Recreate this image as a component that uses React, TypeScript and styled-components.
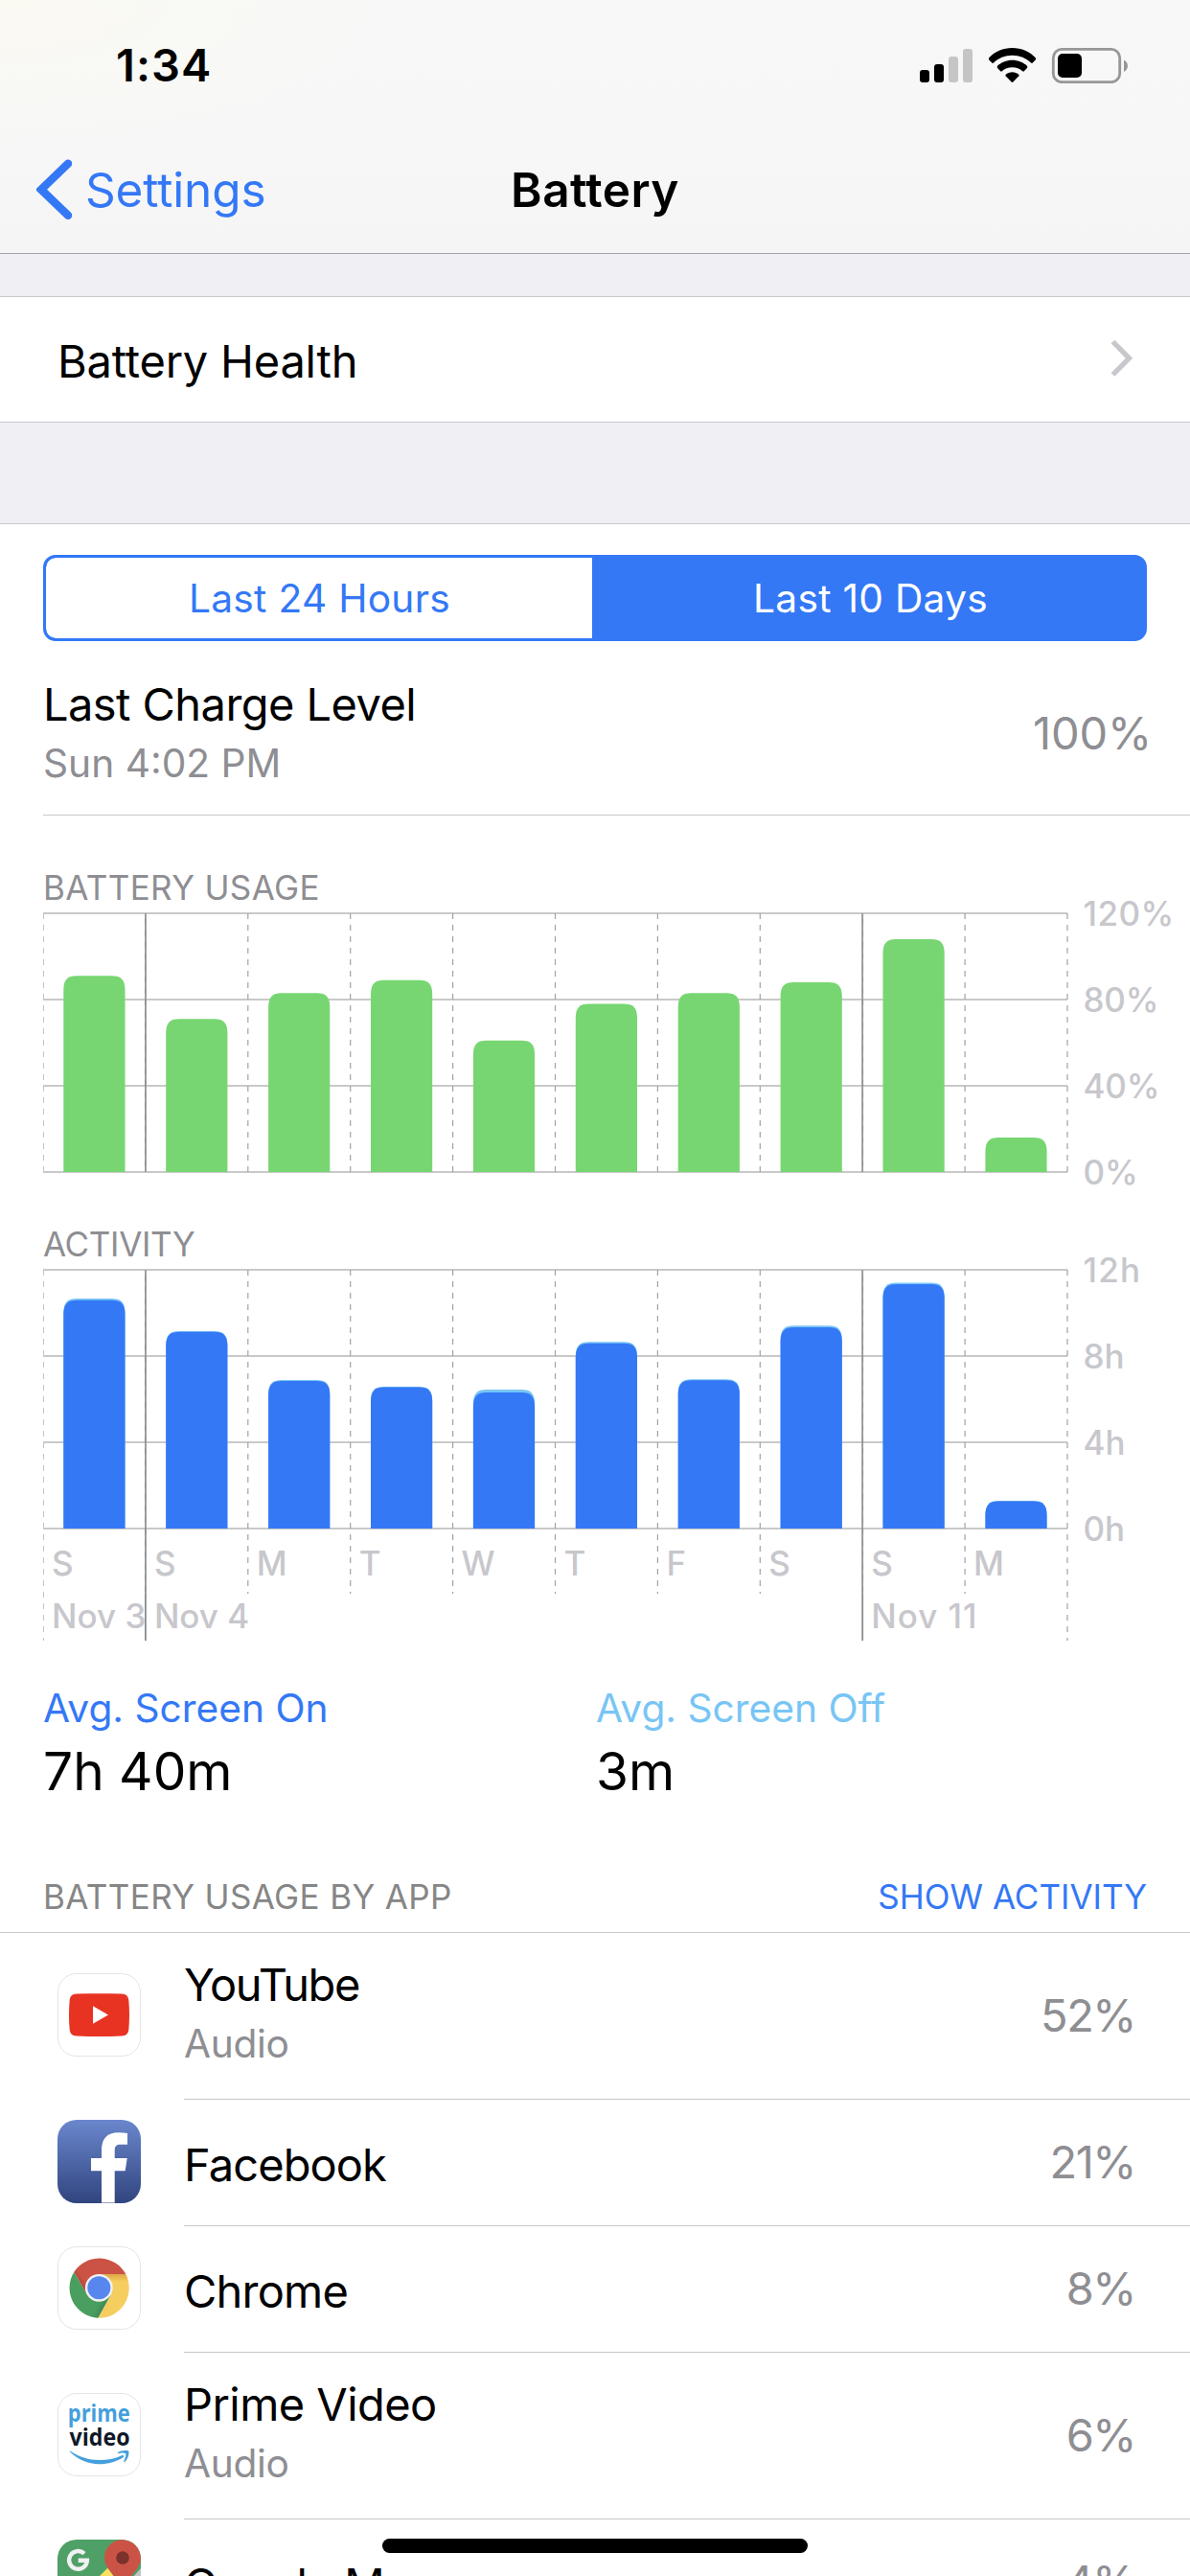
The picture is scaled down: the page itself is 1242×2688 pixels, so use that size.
import React from "react";
import styled, { createGlobalStyle } from "styled-components";

const GlobalStyle = createGlobalStyle`
  html, body { margin: 0; padding: 0; background: #fff; }
  *, *::before, *::after { box-sizing: border-box; }
`;

const color = {
  blue: "#3478f6",
  sky: "#78c5f5",
  green: "#77d672",
  gray: "#8e8e93",
  faint: "#c7c7cc",
  line: "#c8c7cc",
  group: "#efeff4",
};

/* ---------- layout ---------- */

const Screen = styled.div`
  position: relative;
  display: flex;
  flex-direction: column;
  width: 1242px;
  height: 2688px;
  overflow: hidden;
  background: #fff;
  color: #000;
  font-family: Inter, "Liberation Sans", sans-serif;
  font-weight: 400;
  white-space: nowrap;
`;

const Header = styled.header`
  flex: none;
  height: 265px;
  border-bottom: 1px solid #a7a7aa;
  background: radial-gradient(ellipse 420px 160px at 0 0, rgba(251, 250, 240, 0.75), rgba(251, 250, 240, 0)),
    linear-gradient(#f8f8f8, #f7f7f7 60%, #f5f5f5);
`;

const StatusBar = styled.div`
  display: flex;
  align-items: center;
  justify-content: space-between;
  height: 132px;
  padding: 4px 64px 0 121px;
`;

const Time = styled.span`
  font-size: 47px;
  font-weight: 600;
  line-height: 60px;
  letter-spacing: 1.1px;
`;

const NavBar = styled.nav`
  display: grid;
  grid-template-columns: 1fr auto 1fr;
  align-items: center;
  height: 132px;
  padding: 0 38px;
`;

const BackButton = styled.a`
  display: flex;
  align-items: center;
  gap: 13px;
  color: ${color.blue};
  font-size: 49.5px;
  line-height: 64px;
  letter-spacing: -0.14px;
`;

const NavTitle = styled.h1`
  margin: 0;
  font-size: 49.5px;
  font-weight: 600;
  line-height: 64px;
  letter-spacing: 0.44px;
`;

const GroupGap = styled.div<{ $height: number }>`
  flex: none;
  height: ${(p) => p.$height}px;
  border-bottom: 1px solid ${color.line};
  background: ${color.group};
`;

const LinkRow = styled.div`
  display: flex;
  flex: none;
  align-items: center;
  justify-content: space-between;
  height: 131px;
  padding: 0 58px 0 60px;
  border-bottom: 1px solid ${color.line};
`;

const LinkLabel = styled.span`
  padding-top: 4px;
  font-size: 47px;
  line-height: 60px;
  letter-spacing: -0.21px;
`;

const Segments = styled.div`
  display: flex;
  flex: none;
  height: 90px;
  margin: 32px 45px 0;
  border: 3px solid ${color.blue};
  border-radius: 13px;
  background: ${color.blue};
  overflow: hidden;
`;

const Segment = styled.button<{ $active?: boolean }>`
  flex: none;
  width: ${(p) => (p.$active ? 576 : 570)}px;
  padding: 2px 0 0 ${(p) => (p.$active ? 5 : 1)}px;
  border: 0;
  border-radius: ${(p) => (p.$active ? "0" : "10px 0 0 10px")};
  background: ${(p) => (p.$active ? color.blue : "#fff")};
  color: ${(p) => (p.$active ? "#fff" : color.blue)};
  font-family: inherit;
  font-size: 40.7px;
  line-height: 82px;
  letter-spacing: 0.28px;
`;

const ChargeRow = styled.div`
  display: flex;
  flex: none;
  align-items: center;
  justify-content: space-between;
  height: 182px;
  margin-left: 45px;
  padding: 14px 40px 0 0;
  border-bottom: 1px solid ${color.line};
`;

const Stack = styled.div`
  display: flex;
  flex-direction: column;
`;

const Title = styled.span<{ $track?: number }>`
  font-size: 47px;
  line-height: 60px;
  letter-spacing: ${(p) => p.$track ?? 0}px;
`;

const Subtitle = styled.span<{ $track?: number }>`
  color: ${color.gray};
  font-size: 40.7px;
  line-height: 64px;
  letter-spacing: ${(p) => p.$track ?? 0}px;
`;

const ChargeValue = styled.span`
  padding-bottom: 4px;
  color: ${color.gray};
  font-size: 47px;
  line-height: 60px;
  letter-spacing: -0.14px;
`;

const ChartSection = styled.section<{ $top: number }>`
  display: flex;
  flex: none;
  flex-direction: column;
  padding: ${(p) => p.$top}px 0 0 45px;
`;

const ChartTitle = styled.h2<{ $track: number }>`
  margin: 0;
  padding-bottom: 2px;
  color: ${color.gray};
  font-size: 35px;
  font-weight: 400;
  line-height: 48px;
  letter-spacing: ${(p) => p.$track}px;
`;

const ChartSvg = styled.svg`
  display: block;
  overflow: visible;
`;

const AxisText = styled.text`
  fill: ${color.faint};
  font-size: 35px;
  font-weight: 500;
`;

const Averages = styled.div`
  display: grid;
  flex: none;
  grid-template-columns: 577px 1fr;
  padding: 39px 0 0 45px;
`;

const AverageLabel = styled.span<{ $tint: string }>`
  color: ${(p) => p.$tint};
  font-size: 40.7px;
  line-height: 60px;
`;

const AverageValue = styled.span`
  font-size: 55px;
  line-height: 70px;
`;

const ListHeader = styled.div`
  display: flex;
  flex: none;
  align-items: center;
  justify-content: space-between;
  height: 134px;
  padding: 58px 45px 0 45px;
  border-bottom: 1px solid ${color.line};
  font-size: 35px;
  line-height: 50px;
`;

const ListTitle = styled.span`
  color: #868686;
  letter-spacing: 0.37px;
`;

const ListAction = styled.a`
  color: ${color.blue};
`;

const AppRow = styled.div<{ $tall: boolean }>`
  display: flex;
  flex: none;
  align-items: center;
  height: ${(p) => (p.$tall ? 174 : 132)}px;
  padding-left: 60px;
`;

const AppIcon = styled.svg`
  display: block;
  flex: none;
  width: 87px;
  height: 87px;
  margin: 0 45px 3px 0;
`;

const AppBody = styled.div`
  display: flex;
  flex: 1;
  align-items: center;
  justify-content: space-between;
  height: 100%;
  padding-right: 57px;
  border-bottom: 1px solid ${color.line};
`;

const AppText = styled(Stack)<{ $single: boolean }>`
  padding: ${(p) => (p.$single ? "5px 0 0" : "0 0 1px")};
`;

const Percent = styled.span<{ $track: number }>`
  padding-bottom: 2px;
  color: ${color.gray};
  font-size: 47px;
  line-height: 60px;
  letter-spacing: ${(p) => p.$track}px;
`;

const HomeIndicator = styled.div`
  position: absolute;
  left: 399px;
  top: 2649px;
  width: 444px;
  height: 15px;
  border-radius: 8px;
  background: #000;
`;

/* ---------- icons ---------- */

const StatusIcons = () => (
  <svg width="218" height="38" viewBox="960 48 218 38">
    <rect x="960" y="72" width="10" height="13" rx="3" />
    <rect x="975" y="66" width="10" height="19" rx="3" />
    <rect x="990" y="58" width="10" height="27" rx="3" fill="#c5c5c5" />
    <rect x="1005" y="50" width="10" height="35" rx="3" fill="#c5c5c5" />
    <path d="M1056.5 49C1066 49 1075 53 1081 59.5L1080.8 61.5L1077.5 64.8Q1076.8 65.3 1076 64.6C1071 59.8 1064 56.8 1056.5 56.8C1049 56.8 1042 59.8 1037 64.6Q1036.2 65.3 1035.5 64.8L1032.2 61.5L1032 59.5C1038 53 1047 49 1056.5 49Z" />
    <path d="M1056.5 61.8C1062.5 61.8 1068.2 64.2 1072.2 68L1072.2 69.8L1068.8 73.3Q1068 74 1067.2 73.3C1064.5 70.8 1060.7 69.3 1056.5 69.3C1052.3 69.3 1048.5 70.8 1045.8 73.3Q1045 74 1044.2 73.3L1040.8 69.8L1040.8 68C1044.8 64.2 1050.5 61.8 1056.5 61.8Z" />
    <path d="M1056.5 74.3C1059 74.3 1061.6 75.2 1063.4 76.8V78.3L1057.4 84.5Q1056.5 85.3 1055.6 84.5L1049.6 78.3V76.8C1051.4 75.2 1054 74.3 1056.5 74.3Z" />
    <rect x="1099.3" y="50.3" width="69.4" height="34.4" rx="9" fill="none" stroke="#979797" strokeWidth="2.8" />
    <path d="M1173 61.5C1178.300 64 1178.300 71.500 1173 74Z" fill="#979797" />
    <rect x="1104" y="55" width="25" height="25" rx="5" />
  </svg>
);

const BackChevron = () => (
  <svg width="38" height="64" viewBox="0 0 38 64">
    <path d="M33 4.7L5 31.8L33 58.8" fill="none" stroke={color.blue} strokeWidth="8.5" strokeLinecap="round" strokeLinejoin="miter" />
  </svg>
);

const RowChevron = () => (
  <svg width="26" height="42" viewBox="0 0 26 42">
    <path d="M3.5 2.5L20.5 19.8L3.5 37" fill="none" stroke={color.faint} strokeWidth="5.3" />
  </svg>
);

const Tile = () => <rect x="0.5" y="0.5" width="86" height="86" rx="19.5" fill="#fff" stroke="#e4e4e5" />;

const YouTubeIcon = () => (
  <AppIcon viewBox="0 0 87 87">
    <Tile />
    <path d="M20 21.5C36 21 51 21 67 21.5C72 21.8 74 24 74.4 29C75.2 39 75.2 48 74.4 58C74 63 72 65.2 67 65.5C51 66.2 36 66.2 20 65.5C15 65.2 13 63 12.6 58C11.8 48 11.8 39 12.6 29C13 24 15 21.8 20 21.5Z" fill="#e83323" />
    <path d="M37 34.3L53 43.5L37 52.7Z" fill="#fff" />
  </AppIcon>
);

const FacebookIcon = () => (
  <AppIcon viewBox="0 0 87 87">
    <defs>
      <linearGradient id="fb" x1="0" y1="0" x2="0" y2="1">
        <stop offset="0" stopColor="#6a87cd" />
        <stop offset="1" stopColor="#31457f" />
      </linearGradient>
    </defs>
    <rect width="87" height="87" rx="20" fill="url(#fb)" />
    <path d="M46 86.5V53.3H35V40H46V32C46 19.5 52 13.3 63.5 13.3Q69 13.3 73 14V25.7H66C61.5 25.7 59.7 27.5 59.7 32V40H72.7L70.7 53.3H59.7V86.5Z" fill="#fff" />
  </AppIcon>
);

const ChromeIcon = () => (
  <AppIcon viewBox="0 0 87 87">
    <defs>
      <linearGradient id="crRed" x1="18" y1="46" x2="30" y2="39" gradientUnits="userSpaceOnUse">
        <stop offset="0.2" stopColor="#9c3a30" />
        <stop offset="1" stopColor="#cb5345" />
      </linearGradient>
      <linearGradient id="crYellow" x1="0" y1="29" x2="0" y2="37" gradientUnits="userSpaceOnUse">
        <stop offset="0" stopColor="#dca845" />
        <stop offset="1" stopColor="#f6cd5f" />
      </linearGradient>
      <linearGradient id="crGreen" x1="52" y1="65" x2="42" y2="60" gradientUnits="userSpaceOnUse">
        <stop offset="0" stopColor="#37814c" />
        <stop offset="1" stopColor="#4a9e60" />
      </linearGradient>
    </defs>
    <Tile />
    <path d="M71.3 29A31.5 31.5 0 0 1 42.3 74.8L55.7 50.5L43.3 29Z" fill="url(#crYellow)" />
    <path d="M17.3 26.7A31.5 31.5 0 0 0 42.3 74.8L55.7 50.5L31 50.5Z" fill="url(#crGreen)" />
    <path d="M17.3 26.7A31.5 31.5 0 0 1 71.3 29H43.3L31 50.5Z" fill="url(#crRed)" />
    <circle cx="43.3" cy="43.3" r="14.4" fill="#f1f1f1" />
    <circle cx="43.3" cy="43.3" r="12" fill="#5686ee" />
  </AppIcon>
);

const PrimeWord = styled.text`
  font-family: "Open Sans", "Noto Sans", sans-serif;
  font-size: 25.5px;
  font-weight: 700;
`;

const PrimeVideoIcon = () => (
  <AppIcon viewBox="0 0 87 87">
    <Tile />
    <PrimeWord x="10.8" y="30.3" textLength="65" lengthAdjust="spacingAndGlyphs" fill="#459fdc">prime</PrimeWord>
    <PrimeWord x="12.5" y="54.5" textLength="63" lengthAdjust="spacingAndGlyphs" fill="#101827">video</PrimeWord>
    <path d="M12.7 60.3C22 67 33 70 43.5 70C52 70 60 68.5 67 65.2C69 64.5 70 66 68.5 67.2C61 72 52 74.3 43.5 74.2C32 74 21 69.5 13 61.5Z" fill="#459fdc" />
    <path d="M62.5 62.3C66 60 71 59.6 74.3 60.5C75 64 73.5 69 70 72.3C68.8 72.5 69.3 71.5 69.6 70.5C70.8 67.5 71.8 64.5 71.3 63.3C70 62 66 62.4 63 62.9Z" fill="#459fdc" />
  </AppIcon>
);

const MapsIcon = () => (
  <AppIcon viewBox="0 0 87 87">
    <defs>
      <clipPath id="mapsTile">
        <rect width="87" height="87" rx="20" />
      </clipPath>
    </defs>
    <g clipPath="url(#mapsTile)">
      <rect width="87" height="87" fill="#4fa067" />
      <path d="M87 30L60 60L87 87Z" fill="#c4c4c4" />
      <path d="M52.5 29.5L30 52H63L60 40Z" fill="#fae05f" />
      <path d="M68 0C78.5 0 87 8.5 87 19C87 32 72 38 68 56C64 38 49 32 49 19C49 8.5 57.5 0 68 0Z" fill="#cb5345" />
      <circle cx="68" cy="19" r="6.8" fill="#7a322b" />
      <path d="M28 14.6A9.4 9.4 0 1 0 30.9 21.7H21.7" fill="none" stroke="#f1f1f1" strokeWidth="4.4" />
    </g>
  </AppIcon>
);

/* ---------- charts ---------- */

const PITCH = 106.9;
const COLUMNS = Array.from({ length: 11 }, (_, i) => i);
const WEEK_STARTS = [1, 8];
const BASELINE = 271;

const barPath = (column: number, height: number) => {
  const x = 21.3 + column * PITCH;
  const top = BASELINE - height;
  const w = 64.2;
  return `M${x} ${BASELINE}V${top + 15}C${x} ${top + 4} ${x + 4} ${top} ${x + 14} ${top}H${x + w - 14}C${x + w - 4} ${top} ${x + w} ${top + 4} ${x + w} ${top + 15}V${BASELINE}Z`;
};

interface Series {
  fill: string;
  heights: number[];
}

interface ChartProps {
  height: number;
  series: Series[];
  labels: [string, number][];
  days?: string[];
  dates?: Record<number, string>;
}

const BarChart = ({ height, series, labels, days, dates }: ChartProps) => {
  const shortEnd = days ? 339 : BASELINE;
  const longEnd = days ? 388 : BASELINE;
  return (
    <ChartSvg width="1180" height={height} viewBox={`0 0 1180 ${height}`}>
      {[1, 91, 181, 271].map((y) => (
        <line key={y} x1="0" x2="1069" y1={y} y2={y} stroke="#c9c9c9" strokeWidth="2" />
      ))}
      {days?.map((day, i) => (
        <AxisText key={i} x={i * PITCH + 9} y="319.7">{day}</AxisText>
      ))}
      {dates &&
        Object.entries(dates).map(([i, label]) => (
          <AxisText key={i} x={Number(i) * PITCH + 9} y="374.7" letterSpacing={label === "Nov 11" ? 1 : 0}>
            {label}
          </AxisText>
        ))}
      {WEEK_STARTS.map((i) => (
        <line key={i} x1={i * PITCH} x2={i * PITCH} y1="1" y2={longEnd} stroke="#8a8b8f" strokeWidth="1.8" />
      ))}
      {COLUMNS.map((i) => (
        <line
          key={i}
          x1={i === 0 ? 0.5 : i * PITCH}
          x2={i === 0 ? 0.5 : i * PITCH}
          y1="1"
          y2={i === 0 || i === 10 ? longEnd : shortEnd}
          stroke={i === 0 ? "#c4c4c6" : "#a2a2a5"}
          strokeWidth={i === 0 ? 1 : 1.2}
          strokeDasharray="6 6"
        />
      ))}
      {series.map((s) => s.heights.map((h, i) => <path key={s.fill + i} d={barPath(i, h)} fill={s.fill} />))}
      {labels.map(([label, track], i) => (
        <AxisText key={label} x="1085.5" y={i * 90 + 13.7} letterSpacing={track}>
          {label}
        </AxisText>
      ))}
    </ChartSvg>
  );
};

const usage = [91, 71, 83, 89, 61, 78, 83, 88, 108, 16].map((v) => v * 2.25);
const activityTotal = [240, 206, 155, 148, 145, 194.7, 155.7, 211.7, 256.5, 29];
const activityOn = [238.3, 205.3, 154, 147.6, 142, 193.3, 154.8, 210, 255, 28.6];

/* ---------- data ---------- */

const apps = [
  { name: "YouTube", track: -1.4, note: "Audio", percent: "52%", Icon: YouTubeIcon },
  { name: "Facebook", track: -0.9, percent: "21%", Icon: FacebookIcon },
  { name: "Chrome", track: -0.8, percent: "8%", Icon: ChromeIcon },
  { name: "Prime Video", track: -0.56, note: "Audio", percent: "6%", Icon: PrimeVideoIcon },
  { name: "Google Maps", track: -0.7, percent: "4%", Icon: MapsIcon },
];

export default function App() {
  return (
    <Screen>
      <GlobalStyle />
      <Header>
        <StatusBar>
          <Time>1:34</Time>
          <StatusIcons />
        </StatusBar>
        <NavBar>
          <BackButton>
            <BackChevron />
            Settings
          </BackButton>
          <NavTitle>Battery</NavTitle>
        </NavBar>
      </Header>

      <GroupGap $height={45} />
      <LinkRow>
        <LinkLabel>Battery Health</LinkLabel>
        <RowChevron />
      </LinkRow>
      <GroupGap $height={106} />

      <Segments>
        <Segment>Last 24 Hours</Segment>
        <Segment $active>Last 10 Days</Segment>
      </Segments>

      <ChargeRow>
        <Stack>
          <Title $track={-0.56}>Last Charge Level</Title>
          <Subtitle>Sun 4:02 PM</Subtitle>
        </Stack>
        <ChargeValue>100%</ChargeValue>
      </ChargeRow>

      <ChartSection $top={51}>
        <ChartTitle $track={0.36}>BATTERY USAGE</ChartTitle>
        <BarChart
          height={272}
          series={[{ fill: color.green, heights: usage }]}
          labels={[["120%", 0.4], ["80%", -0.2], ["40%", -0.2], ["0%", -0.2]]}
        />
      </ChartSection>

      <ChartSection $top={50}>
        <ChartTitle $track={-0.33}>ACTIVITY</ChartTitle>
        <BarChart
          height={390}
          series={[
            { fill: color.sky, heights: activityTotal },
            { fill: color.blue, heights: activityOn },
          ]}
          labels={[["12h", 1.2], ["8h", 0], ["4h", 0], ["0h", 0]]}
          days={["S", "S", "M", "T", "W", "T", "F", "S", "S", "M"]}
          dates={{ 0: "Nov 3", 1: "Nov 4", 8: "Nov 11" }}
        />
      </ChartSection>

      <Averages>
        <Stack>
          <AverageLabel $tint={color.blue}>Avg. Screen On</AverageLabel>
          <AverageValue>7h 40m</AverageValue>
        </Stack>
        <Stack>
          <AverageLabel $tint={color.sky}>Avg. Screen Off</AverageLabel>
          <AverageValue>3m</AverageValue>
        </Stack>
      </Averages>

      <ListHeader>
        <ListTitle>BATTERY USAGE BY APP</ListTitle>
        <ListAction>SHOW ACTIVITY</ListAction>
      </ListHeader>

      {apps.map(({ name, track, note, percent, Icon }) => (
        <AppRow key={name} $tall={Boolean(note)}>
          <Icon />
          <AppBody>
            <AppText $single={!note}>
              <Title $track={track}>{name}</Title>
              {note && <Subtitle $track={-0.35}>{note}</Subtitle>}
            </AppText>
            <Percent $track={-1.5}>{percent}</Percent>
          </AppBody>
        </AppRow>
      ))}

      <HomeIndicator />
    </Screen>
  );
}
